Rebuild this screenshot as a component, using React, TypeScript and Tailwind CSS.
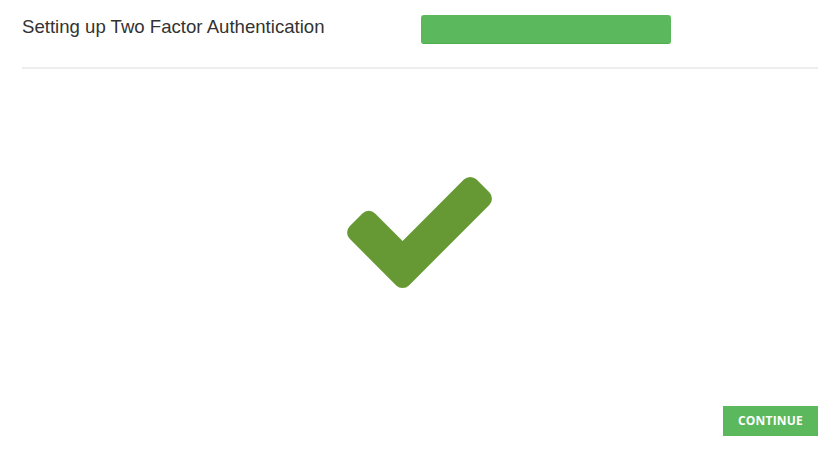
import React from 'react';

const CheckIcon: React.FC = () => (
  <svg width="145" height="111" viewBox="121 334 1550 1188" className="block">
    <path
      fill="#669933"
      d="M1671 566q0 40-28 68l-724 724-136 136q-28 28-68 28t-68-28l-136-136-362-362q-28-28-28-68t28-68l136-136q28-28 68-28t68 28l294 295 656-657q28-28 68-28t68 28l136 136q28 28 28 68z"
    />
  </svg>
);

const App: React.FC = () => {
  return (
    <div className="w-[839px] h-[456px] bg-white flex flex-col pl-[22px] pr-[21px] font-['Liberation_Sans',Arial,sans-serif]">
      <div className="flex items-start h-[67px]">
        <h2 className="w-[399px] pt-[16px] text-[18.6px] leading-[22px] text-[#333333] font-normal">
          Setting up Two Factor Authentication
        </h2>
        <div className="mt-[15px] w-[250px] h-[29px] rounded-[3px] bg-[#5cb85c] border-b border-[#4cae4c]"></div>
      </div>
      <div className="h-[2px] bg-[#eeeeee]"></div>
      <div className="flex justify-center pt-[108px] pr-px">
        <CheckIcon />
      </div>
      <div className="mt-auto mb-[20px] flex justify-end">
        <button className="w-[95px] h-[30px] bg-[#5cb85c] text-white text-[12px] font-bold font-['Open_Sans',sans-serif] tracking-[0.2px]">
          CONTINUE
        </button>
      </div>
    </div>
  );
};

export default App;
